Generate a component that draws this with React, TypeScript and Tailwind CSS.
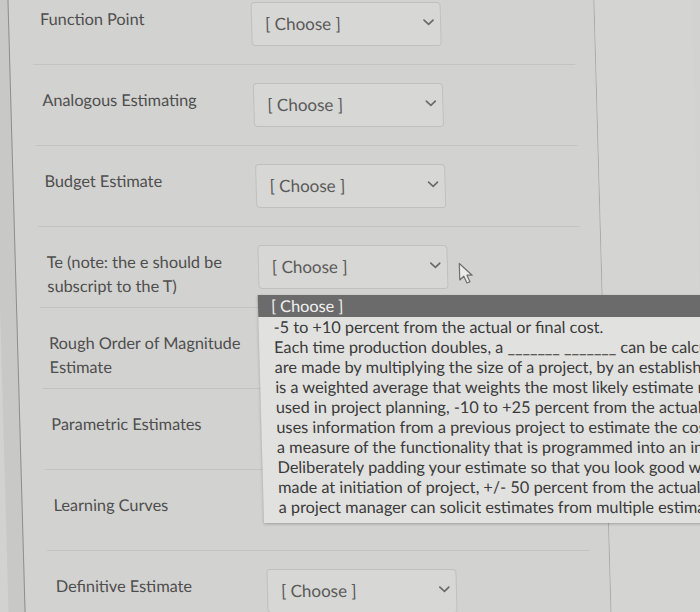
import React from 'react'

const font = { fontFamily: 'Lato, "Open Sans", "Liberation Sans", sans-serif' }

const rows = [
  { label: 'Function Point' },
  { label: 'Analogous Estimating' },
  { label: 'Budget Estimate' },
  { label: 'Te (note: the e should be subscript to the T)', open: true },
  { label: 'Rough Order of Magnitude Estimate', hidden: true },
  { label: 'Parametric Estimates', hidden: true },
  { label: 'Learning Curves', hidden: true },
  { label: 'Definitive Estimate' },
]

const options = [
  '-5 to +10 percent from the actual or final cost.',
  'Each time production doubles, a _______ _______ can be calculated',
  'are made by multiplying the size of a project, by an established rate',
  'is a weighted average that weights the most likely estimate more heavily',
  'used in project planning, -10 to +25 percent from the actual cost',
  'uses information from a previous project to estimate the cost',
  'a measure of the functionality that is programmed into an information system',
  'Deliberately padding your estimate so that you look good when',
  'made at initiation of project, +/- 50 percent from the actual cost',
  'a project manager can solicit estimates from multiple estimators',
]

function Chevron() {
  return (
    <svg width="11" height="7" viewBox="0 0 11 7" className="-mt-[4px]">
      <path d="M1 1.2 L5.5 5.4 L10 1.2" fill="none" stroke="#6a6a6a" strokeWidth="1.7" strokeLinecap="round" />
    </svg>
  )
}

function Pointer() {
  return (
    <svg width="17" height="23" viewBox="0 0 17 23" className="absolute left-[200px] top-[17px]">
      <path
        d="M1.5 1.5 L1.5 18 L5.6 14.2 L8.6 21 L11.6 19.8 L8.8 13.2 L14 13.2 Z"
        fill="#ececea"
        stroke="#6f6f6f"
        strokeWidth="1.2"
        strokeLinejoin="round"
      />
    </svg>
  )
}

function Dropdown() {
  return (
    <div className="absolute left-[-1px] top-[calc(100%+6px)] z-10 w-[520px] bg-[#e1e1df] pb-[6px] text-[16.3px] leading-[20px] text-[#3a3a3a] shadow-[0_1px_3px_rgba(0,0,0,0.25)]">
      <div className="bg-[#6b6b6b] px-[13px] py-[1px] text-[#f1f1f1]">[ Choose ]</div>
      {options.map((o) => (
        <div key={o} className="whitespace-nowrap px-[15px]">
          {o}
        </div>
      ))}
    </div>
  )
}

function Select({ open }: { open?: boolean }) {
  return (
    <div className="relative">
      <div className="flex h-[44px] w-[190px] items-center justify-between rounded-[4px] border border-[#c0c0be] bg-[#d7d7d5] pl-[13px] pr-[6px] text-[17px] text-[#5a5a5a]">
        <span>[ Choose ]</span>
        <Chevron />
      </div>
      {open && <Pointer />}
      {open && <Dropdown />}
    </div>
  )
}

export default function App() {
  return (
    <div className="h-[612px] w-[700px] overflow-hidden bg-[#d2d2d0]" style={font}>
      <div className="flex h-full w-full skew-x-[1.6deg]">
        <div className="w-[17px] shrink-0 border-r border-[#8e8e8c] bg-[#c8c8c6]" />
        <div className="w-[586px] shrink-0 border-r border-[#a9a9a7]">
          <div className="ml-[23px] mt-[-16px] w-[542px]">
            {rows.map((r) => (
              <div key={r.label} className="flex h-[81px] items-start border-b border-[#c3c3c1] pt-[18px]">
                <div className="w-[219px] shrink-0 pl-[8px] pr-[14px] pt-[5px] text-[16.3px] leading-[24px] text-[#4e4e4e]">
                  {r.label}
                </div>
                {!r.hidden && <Select open={r.open} />}
              </div>
            ))}
          </div>
        </div>
        <div className="flex-1 bg-[#d4d4d2]" />
      </div>
    </div>
  )
}
